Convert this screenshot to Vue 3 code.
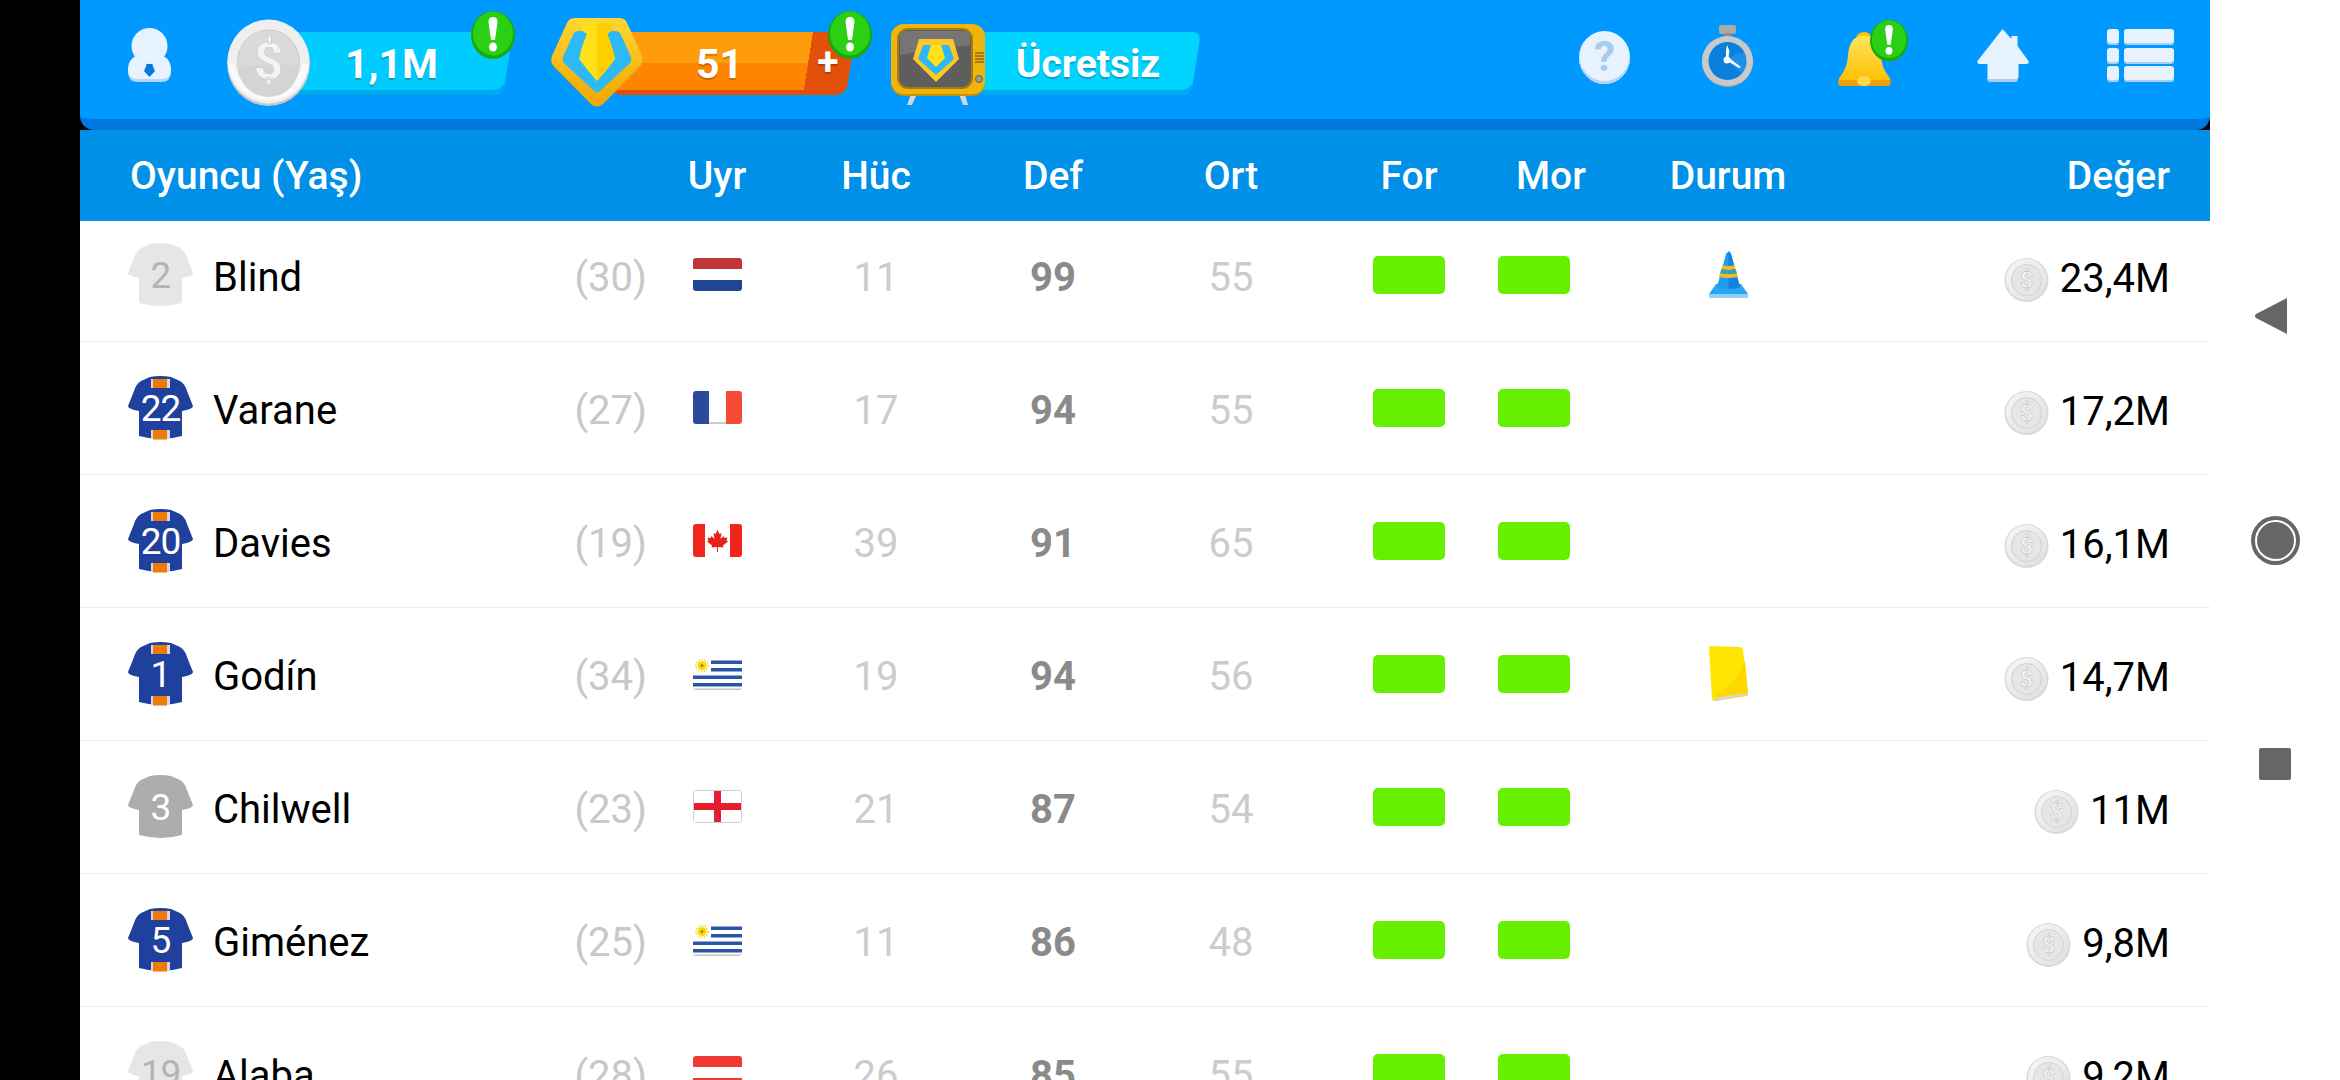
<script setup>
const columns = ["Uyr", "Hüc", "Def", "Ort", "For", "Mor", "Durum"];

const players = [
  { no: 2, kit: "white", name: "Blind", age: 30, flag: "nl", att: 11, def: 99, mid: 55, status: "cone", value: "23,4M" },
  { no: 22, kit: "blue", name: "Varane", age: 27, flag: "fr", att: 17, def: 94, mid: 55, status: "", value: "17,2M" },
  { no: 20, kit: "blue", name: "Davies", age: 19, flag: "ca", att: 39, def: 91, mid: 65, status: "", value: "16,1M" },
  { no: 1, kit: "blue", name: "Godín", age: 34, flag: "uy", att: 19, def: 94, mid: 56, status: "card", value: "14,7M" },
  { no: 3, kit: "gray", name: "Chilwell", age: 23, flag: "en", att: 21, def: 87, mid: 54, status: "", value: "11M" },
  { no: 5, kit: "blue", name: "Giménez", age: 25, flag: "uy", att: 11, def: 86, mid: 48, status: "", value: "9,8M" },
  { no: 19, kit: "white", name: "Alaba", age: 28, flag: "at", att: 26, def: 85, mid: 55, status: "", value: "9,2M" },
];
</script>

<template>
  <div class="screen">
    <svg class="defs" width="0" height="0" aria-hidden="true">
      <defs>
        <linearGradient id="silver" x1="0" y1="0" x2="1" y2="1">
          <stop offset="0" stop-color="#f8f8f8" />
          <stop offset="1" stop-color="#dedede" />
        </linearGradient>
        <linearGradient id="gold" x1="0" y1="0" x2="0" y2="1">
          <stop offset="0" stop-color="#ffd633" />
          <stop offset="1" stop-color="#f0a800" />
        </linearGradient>
        <linearGradient id="bellfill" x1="0" y1="0" x2="0" y2="1">
          <stop offset="0" stop-color="#ffe45c" />
          <stop offset="1" stop-color="#ffbe00" />
        </linearGradient>
        <symbol id="badge" viewBox="0 0 44 48">
          <ellipse cx="22" cy="24" rx="22" ry="24" fill="#18a80c" />
          <ellipse cx="22" cy="22.5" rx="20" ry="22" fill="#2bd014" />
          <path d="M17.5 11q0-5 4.500-5t4.500 5l-2.500 18h-4z" fill="#fff" />
          <ellipse cx="22" cy="36" rx="4" ry="4.500" fill="#fff" />
        </symbol>
        <symbol id="coin" viewBox="0 0 45 44">
          <ellipse cx="22.500" cy="22" rx="22" ry="22" fill="#d8d8d8" />
          <ellipse cx="22.500" cy="21.500" rx="20.500" ry="20.500" fill="url(#silver)" />
          <ellipse cx="22.500" cy="22" rx="15" ry="15.500" fill="#e6e6e6" stroke="#d2d2d2" />
          <text x="22.500" y="30" text-anchor="middle" class="coin-sign">$</text>
        </symbol>
      </defs>
    </svg>

    <div class="game">
      <header class="topbar">
        <svg class="avatar" viewBox="0 0 43 54">
          <path d="M0 44q0-13 12-15h19q12 2 12 15q0 10-10 10h-23q-10 0-10-10z" fill="#b6d8f6" />
          <path d="M0 42q0-13 12-15h19q12 2 12 15q0 9-10 9h-23q-10 0-10-9z" fill="#e6f3ff" />
          <path d="M17 33h9l-1.500 4 2.500 6-5.500 6-5.500-6 2.500-6z" fill="#0a78dc" />
          <ellipse cx="21.500" cy="21" rx="16" ry="15" fill="#b6d8f6" />
          <circle cx="21.500" cy="18" r="18" fill="#e6f3ff" />
        </svg>

        <div class="stat coins">
          <svg class="stat-icon big-coin" viewBox="0 0 83 87">
            <ellipse cx="41.500" cy="44.500" rx="41.500" ry="42.500" fill="#c8c8c8" />
            <ellipse cx="41.500" cy="42.500" rx="41" ry="42" fill="#efefef" />
            <path d="M1 46a41 42 0 0 0 81 0l-6-2a35 36 0 0 1-69 0z" fill="#fafafa" />
            <ellipse cx="41.500" cy="43" rx="31" ry="32" fill="#dadada" stroke="#c8c8c8" />
            <path d="M10.500 46a31 32 0 0 0 62 0z" fill="#d4d4d4" />
            <text x="41.500" y="60" text-anchor="middle" class="big-sign">$</text>
          </svg>
          <div class="pill cyan">1,1M</div>
          <svg class="badge coins-badge"><use href="#badge" /></svg>
        </div>

        <div class="stat tokens">
          <svg class="stat-icon shield" viewBox="0 0 92 89">
            <path d="M24 1h44q6 0 8 5l15 33q2 6-2 10l-37 37q-6 5-12 0l-37-37q-4-4-2-10l15-33q2-5 8-5z" fill="#f2a900" />
            <path d="M24 0h44q6 0 8 5l15 33q2 5-2 9l-37 36q-6 5-12 0l-37-36q-4-4-2-9l15-33q2-5 8-5z" fill="url(#gold)" />
            <path d="M28 13h36q4 0 6 4l10 22q1 4-2 7l-29 27q-3 2-6 0l-29-27q-3-3-2-7l10-22q2-4 6-4z" fill="#2cb9f5" />
            <path d="M31 5h30q2 8-5 11q5 11 8 25q-9 12-18 22q-9-10-18-22q3-14 8-25q-7-3-5-11z" fill="#ffe11a" />
            <path d="M46 5h15q2 8-5 11q5 11 8 25q-9 12-18 22z" fill="#ffd000" />
          </svg>
          <div class="pill orange"><span class="pill-num">51</span><span class="pill-plus">+</span></div>
          <svg class="badge tokens-badge"><use href="#badge" /></svg>
        </div>

        <div class="stat video">
          <svg class="stat-icon tv" viewBox="0 0 94 81">
            <path d="M20 70l-4 11h5l5-11zM68 70l4 11h5l-3-11z" fill="#d6d6d6" />
            <rect x="0" y="0" width="94" height="72" rx="13" fill="#c99300" />
            <rect x="0" y="0" width="94" height="70" rx="13" fill="#efb50e" />
            <rect x="7" y="5" width="74" height="59" rx="10" fill="#5e5e5e" stroke="#a87c08" stroke-width="2" />
            <path d="M9 11q0-4 6-4h59q5 0 5 4v10q-30 3-70 10z" fill="#757575" />
            <path d="M28 15h34l6 20-23 23-23-23z" fill="#ffc81e" />
            <path d="M32 21h8l5 7 5-7h8l5 14-18 16-18-16z" fill="#2cb9f5" />
            <path d="M40 21h10l4 13-9 9-9-9z" fill="#ffe11a" />
            <path d="M84 29h9M84 32h9M84 35h9M84 38h9" stroke="#8a6a10" stroke-width="1.500" />
            <circle cx="88" cy="55" r="3.500" fill="#9a9a9a" stroke="#7a6420" />
          </svg>
          <div class="pill cyan light">Ücretsiz</div>
        </div>

        <div class="tools">
          <div class="help">?</div>

          <svg class="watch" viewBox="0 0 51 62">
            <rect x="17" y="0" width="17" height="9" rx="2" fill="#a9a9a9" />
            <rect x="22" y="8" width="7" height="6" fill="#8f8f8f" />
            <ellipse cx="25.500" cy="37" rx="25.500" ry="25" fill="#a3a3a3" />
            <ellipse cx="25.500" cy="36" rx="25.500" ry="25" fill="#c9c9c9" />
            <ellipse cx="25.500" cy="36" rx="19" ry="19" fill="#0b7fdc" />
            <path d="M25.500 36a19 19 0 0 1 17-8a19 19 0 0 1-3 20z" fill="#1a92ea" />
            <path d="M25 20l2.500 6-1.500 9-2-1 0-8zM24 35l3-2 12 9-2 1z" fill="#fff" />
            <circle cx="25" cy="35" r="3.500" fill="#fff" />
          </svg>

          <div class="bell-box">
            <svg class="bell" viewBox="0 0 53 55">
              <ellipse cx="26" cy="7" rx="8" ry="7" fill="#ffc40a" />
              <path d="M26 4c-13 0-15 10-16 20c-1 11-4 15-8 21c-2 3-2 5 0 5h48c3 0 3-2 1-5c-4-6-7-10-8-21c-1-10-4-20-17-20z" fill="url(#bellfill)" />
              <path d="M1 48h51q2 6-2 6h-47q-4 0-2-6z" fill="#f09e00" />
              <ellipse cx="26" cy="49" rx="7" ry="5" fill="#ffd84a" />
            </svg>
            <svg class="badge bell-badge"><use href="#badge" /></svg>
          </div>

          <svg class="home" viewBox="0 0 53 53">
            <path d="M11 49h31v1q0 3-3 3h-25q-3 0-3-3z" fill="#a8cef0" />
            <path d="M26.500 0l9 10v-3h6v10l11 15q1 3-2 3h-8v13q0 2-2 2h-27q-2 0-2-2v-13h-8q-3 0-2-3z" fill="#e6f3ff" />
          </svg>

          <svg class="menu" viewBox="0 0 67 53">
            <g v-for="y in [0, 19, 37]" :key="y">
              <rect x="0" :y="y + 2" width="12" height="14" rx="3" fill="#a8cef0" />
              <rect x="0" :y="y" width="12" height="14" rx="3" fill="#e6f3ff" />
              <rect x="17" :y="y + 2" width="50" height="14" rx="3" fill="#a8cef0" />
              <rect x="17" :y="y" width="50" height="14" rx="3" fill="#e6f3ff" />
            </g>
          </svg>
        </div>
      </header>

      <div class="table-head">
        <div class="head-player">Oyuncu (Yaş)</div>
        <div v-for="col in columns" :key="col" class="head-cell">{{ col }}</div>
        <div class="head-value">Değer</div>
      </div>

      <div class="list">
        <div class="rows">
          <div v-for="p in players" :key="p.name" class="row">
            <div class="player">
              <div class="shirt" :class="p.kit">
                <svg viewBox="0 0 65 64">
                  <path class="shirt-body" d="M22 1q10.500-2 21 0l9 4q5 3 7 10l6 15q0 3-11 5v25q-21 6-43 0v-25q-11-2-11-5l6-15q2-7 7-10z" />
                  <template v-if="p.kit === 'blue'">
                    <rect x="23" y="3" width="19" height="9" fill="#d8d8e4" />
                    <rect x="25" y="3" width="14" height="9" fill="#f07a06" />
                    <rect x="23" y="54" width="19" height="9" fill="#d8d8e4" />
                    <rect x="25" y="54" width="14" height="9.500" fill="#f07a06" />
                  </template>
                </svg>
                <span class="shirt-no">{{ p.no }}</span>
              </div>
              <span class="name">{{ p.name }}</span>
              <span class="age">({{ p.age }})</span>
            </div>

            <div class="cell">
              <svg class="flag" viewBox="0 0 49 33">
                <template v-if="p.flag === 'nl'">
                  <rect width="49" height="11" fill="#c0343a" />
                  <rect y="11" width="49" height="11" fill="#fff" />
                  <rect y="22" width="49" height="11" fill="#1f4594" />
                </template>
                <template v-else-if="p.flag === 'fr'">
                  <rect width="16" height="33" fill="#2a4a9e" />
                  <rect x="16" width="17" height="33" fill="#fff" />
                  <rect x="33" width="16" height="33" fill="#f44a36" />
                  <rect x="16" y="31" width="17" height="2" fill="#ccc" />
                </template>
                <template v-else-if="p.flag === 'ca'">
                  <rect width="49" height="33" fill="#fff" />
                  <rect width="12" height="33" fill="#f0261c" />
                  <rect x="37" width="12" height="33" fill="#f0261c" />
                  <path d="M24.500 6l2 4 2-1-1 6 3-3 1 2 3-.5-1 3 1.500 1-5 4 .5 2-5.500-.5v5h-1v-5l-5.500.5.500-2-5-4 1.500-1-1-3 3 .5 1-2 3 3-1-6 2 1z" fill="#e8201a" />
                </template>
                <template v-else-if="p.flag === 'uy'">
                  <rect width="49" height="33" fill="#fff" />
                  <rect x="18" y="3.500" width="31" height="3.500" fill="#2a55a5" />
                  <rect x="18" y="11" width="31" height="3.500" fill="#2a55a5" />
                  <rect y="18.500" width="49" height="3.500" fill="#2a55a5" />
                  <rect y="26" width="49" height="3.500" fill="#2a55a5" />
                  <circle cx="9" cy="8.500" r="4.500" fill="#f7d80e" />
                  <circle cx="9" cy="8.500" r="6" fill="none" stroke="#f7d80e" stroke-width="1.500" stroke-dasharray="1.500 1.500" />
                  <circle cx="9" cy="8.500" r="1.500" fill="#a8860a" />
                  <rect y="31.500" width="49" height="1.500" fill="#c4c4c4" />
                </template>
                <template v-else-if="p.flag === 'en'">
                  <rect width="49" height="33" fill="#fff" />
                  <rect x="21" width="7" height="33" fill="#e41e2c" />
                  <rect y="13" width="49" height="7" fill="#e41e2c" />
                  <rect x=".500" y=".500" width="48" height="32" rx="2" fill="none" stroke="#cfcfcf" />
                </template>
                <template v-else>
                  <rect width="49" height="11" fill="#ee3a32" />
                  <rect y="11" width="49" height="11" fill="#fff" />
                  <rect y="22" width="49" height="11" fill="#ee3a32" />
                </template>
              </svg>
            </div>
            <div class="cell dim">{{ p.att }}</div>
            <div class="cell strong">{{ p.def }}</div>
            <div class="cell dim">{{ p.mid }}</div>
            <div class="cell"><div class="bar"></div></div>
            <div class="cell to-start"><div class="bar"></div></div>
            <div class="cell">
              <svg v-if="p.status === 'cone'" class="cone" viewBox="0 0 39 47">
                <path d="M7 33h25l7 10q0 1-2 1h-35q-2 0-2-1z" fill="#2aa4f4" />
                <rect x="0" y="43" width="39" height="4" rx="1" fill="#8fd0ee" />
                <path d="M17 3q2.500-4 5 0l9 33q-11.500 4-23 0z" fill="#1e9af0" />
                <path d="M19.500 0q1.500 0 2.500 3l9 33q-5 2-11.500 2z" fill="#0f84e0" />
                <path d="M13.500 14q6 2 12 0l1 4q-7 2-14 0zM11 22q8.500 2 17 0l1 4q-9.500 2-19 0z" fill="#eebc28" />
                <path d="M12.500 18q7 2 14 0l1.500 4q-8.500 2-17 0z" fill="#3aa2b0" />
              </svg>
              <svg v-else-if="p.status === 'card'" class="card" viewBox="0 0 39 55">
                <path d="M1 0l29 1q4 0 4 3l5 44q0 2-2 2l-31 5q-3 0-3-3l-3-49q0-3 1-3z" fill="#ffe600" />
                <path d="M6 48q20-8 30-34l3 34q0 2-2 2l-31 5z" fill="#ffd800" />
                <path d="M5 52l33-5v2l-31 6z" fill="#d8d8d0" />
              </svg>
            </div>
            <div class="worth">
              <svg class="small-coin"><use href="#coin" /></svg>
              <span class="amount">{{ p.value }}</span>
            </div>
          </div>
        </div>
      </div>
    </div>

    <nav class="android">
      <svg class="nav-back" viewBox="0 0 32 36"><path d="M32 0v36l-31-16q-2-2 0-4z" fill="#666" /></svg>
      <div class="nav-home"></div>
      <div class="nav-square"></div>
    </nav>
  </div>
</template>

<style>
html,
body {
  margin: 0;
  background: #000;
}
</style>

<style scoped>
.screen {
  display: flex;
  width: 2340px;
  height: 1080px;
  overflow: hidden;
  padding-left: 80px;
  box-sizing: border-box;
  background: #000;
  font-family: Roboto, "Liberation Sans", sans-serif;
}

.defs {
  position: absolute;
}

.game {
  display: flex;
  flex-direction: column;
  width: 2130px;
  flex: none;
}

.topbar {
  display: flex;
  align-items: center;
  height: 130px;
  box-sizing: border-box;
  padding: 8px 36px 0 48px;
  background: #0099ff;
  border-bottom: 11px solid #0078e0;
  border-radius: 0 0 14px 14px;
  flex: none;
  position: relative;
  z-index: 1;
}

.avatar {
  width: 43px;
  height: 54px;
  margin-right: 56px;
  margin-top: -17px;
  flex: none;
}

.stat {
  display: flex;
  align-items: center;
  position: relative;
  margin-right: 43px;
}

.stat-icon {
  position: relative;
  z-index: 1;
  flex: none;
}

.big-coin {
  width: 83px;
  height: 87px;
  margin-top: -2px;
}

.big-sign {
  font: 700 52px Roboto, sans-serif;
  fill: #f3f3f3;
  stroke: #c8c8c8;
  stroke-width: 0.6px;
}

:deep(.coin-sign) {
  font: 700 23px Roboto, sans-serif;
  fill: #f2f2f2;
  stroke: #c2c2c2;
  stroke-width: 0.5px;
}

.shield {
  width: 92px;
  height: 89px;
  margin-top: -2px;
}

.tv {
  width: 94px;
  height: 81px;
  margin-top: 2px;
}

.pill {
  position: relative;
  height: 63px;
  display: flex;
  align-items: center;
  justify-content: center;
  color: #fff;
  font-size: 41px;
  font-weight: 700;
  text-shadow: 0 2px 1px rgba(0, 0, 0, 0.22);
}

.pill::before {
  content: "";
  position: absolute;
  inset: 0;
  transform: skewX(-9deg);
  border-radius: 4px 8px 10px 4px;
}

.cyan {
  width: 238px;
  margin-left: -40px;
  padding-left: 5px;
  box-sizing: border-box;
}

.cyan::before {
  background: #00ccff;
  box-shadow: inset 0 -5px #00aaec;
}

.light {
  margin-left: -25px;
  width: 236px;
  padding-left: 20px;
  font-size: 39px;
}

.light::before {
  background: #00d4ff;
}

.orange {
  width: 231px;
  margin-left: -23px;
}

.orange::before {
  background:
    linear-gradient(to right, transparent 188px, #e2500a 188px),
    linear-gradient(to bottom, #ff9c0a 50%, #ff8400 50%);
  box-shadow: inset 0 -5px #e04e08;
}

.pill-num {
  position: absolute;
  left: 76px;
  width: 46px;
  text-align: center;
}

.pill-plus {
  position: absolute;
  left: 197px;
  width: 22px;
  text-align: center;
  top: 7px;
  font-size: 39px;
}

.cyan span,
.orange span {
  z-index: 1;
}

.cyan {
  isolation: isolate;
}

.cyan::before {
  z-index: -1;
}

.badge {
  position: absolute;
  z-index: 2;
  width: 44px;
  height: 48px;
}

.coins-badge {
  left: 244px;
  top: -10px;
}

.tokens-badge {
  left: 277px;
  top: -9px;
}

.video {
  margin-right: 0;
  margin-left: -3px;
}

.tools {
  display: flex;
  align-items: center;
  margin-left: auto;
  margin-top: -14px;
}

.help {
  width: 51px;
  height: 53px;
  border-radius: 50%;
  background: #e6f3ff;
  box-shadow: inset 0 -3px #b6d4ee;
  color: #a9cceb;
  font-size: 42px;
  font-weight: 700;
  line-height: 52px;
  text-align: center;
  margin-right: 72px;
  margin-top: 2px;
}

.watch {
  width: 51px;
  height: 62px;
  margin-right: 85px;
  flex: none;
  margin-top: -1px;
}

.bell-box {
  position: relative;
  width: 53px;
  height: 55px;
  margin-right: 85px;
  margin-top: 6px;
}

.bell {
  width: 53px;
  height: 55px;
  display: block;
}

.bell-badge {
  left: 32px;
  top: -13px;
  width: 38px;
  height: 43px;
}

.home {
  width: 53px;
  height: 53px;
  margin-right: 78px;
  flex: none;
  margin-top: -2px;
}

.menu {
  width: 67px;
  height: 53px;
  flex: none;
  margin-top: -2px;
}

.table-head,
.row {
  display: grid;
  grid-template-columns: 566px 142px 176px 178px 178px 178px 106px 248px 1fr;
  align-items: center;
}

.table-head {
  height: 91px;
  flex: none;
  background: #0090e8;
  color: #fff;
  font-size: 39px;
  font-weight: 500;
}

.head-player {
  padding-left: 50px;
}

.head-cell {
  text-align: center;
}

.head-value {
  text-align: right;
  padding-right: 40px;
}

.list {
  flex: 1;
  min-height: 0;
  overflow: hidden;
  background: #fff;
  box-shadow: 1px 0 0 #e6e6e6;
}

.rows {
  margin-top: -12px;
}

.row {
  height: 133px;
  box-sizing: border-box;
  border-bottom: 1px solid #eeeeee;
  font-size: 40px;
}

.player {
  display: flex;
  align-items: center;
  padding-left: 48px;
}

.shirt {
  position: relative;
  width: 65px;
  height: 64px;
  flex: none;
  margin-right: 20px;
}

.shirt svg {
  display: block;
  width: 65px;
  height: 64px;
}

.shirt-no {
  position: absolute;
  inset: 0;
  display: flex;
  align-items: center;
  justify-content: center;
  font-size: 37px;
  letter-spacing: -1px;
  color: #fff;
}

.blue .shirt-body {
  fill: #1f409c;
}

.gray .shirt-body {
  fill: #adadad;
}

.white .shirt-body {
  fill: #e6e6e6;
}

.white .shirt-no {
  color: #b4b4b4;
}

.name {
  color: #000;
  padding-top: 5px;
}

.age {
  margin-left: auto;
  margin-right: -1px;
  color: #c8c8c8;
  padding-top: 5px;
}

.cell {
  display: flex;
  align-items: center;
  justify-content: center;
}

.to-start {
  justify-content: flex-start;
}

.dim {
  color: #cccccc;
  padding-top: 5px;
}

.strong {
  color: #8a8a8a;
  font-weight: 700;
  padding-top: 5px;
}

.flag {
  width: 49px;
  height: 33px;
  border-radius: 3px;
  margin-top: -2px;
}

.bar {
  width: 72px;
  height: 38px;
  border-radius: 5px;
  background: #66f000;
}

.cone {
  width: 39px;
  height: 47px;
  margin-top: -1px;
}

.card {
  width: 39px;
  height: 55px;
  margin-top: -1px;
}

.worth {
  display: flex;
  align-items: center;
  justify-content: flex-end;
  gap: 11px;
  padding-right: 40px;
}

.small-coin {
  width: 45px;
  height: 44px;
  margin-top: 9px;
}

.amount {
  color: #000;
  padding-top: 7px;
}

.android {
  display: flex;
  flex-direction: column;
  align-items: center;
  flex: 1;
  background: #fff;
  padding-top: 298px;
  box-sizing: border-box;
}

.nav-back {
  width: 32px;
  height: 36px;
  margin-right: 8px;
}

.nav-home {
  width: 37px;
  height: 37px;
  margin-top: 186px;
  border-radius: 50%;
  background: #666;
  border: 2px solid #fff;
  box-shadow: 0 0 0 4px #666;
}

.nav-square {
  width: 32px;
  height: 32px;
  margin-top: 187px;
  border-radius: 2px;
  background: #666;
}
</style>
